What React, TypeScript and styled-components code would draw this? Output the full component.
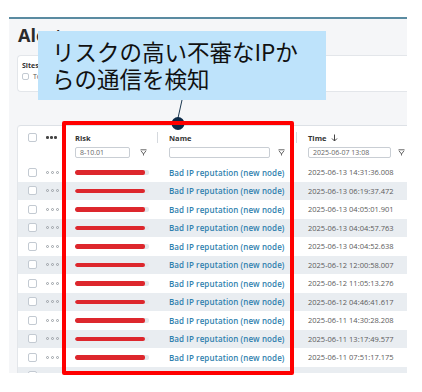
import React from 'react';
import styled, { createGlobalStyle } from 'styled-components';

const GlobalStyle = createGlobalStyle`
  html, body {
    margin: 0;
    padding: 0;
    background: #ffffff;
  }
  body {
    font-family: 'Open Sans', 'Liberation Sans', sans-serif;
  }
`;

const Page = styled.div`
  position: relative;
  width: 422px;
  height: 392px;
  overflow: hidden;
  padding: 17px 0 0 9px;
  box-sizing: border-box;
`;

const Shot = styled.div`
  width: 398px;
  height: 356px;
  border-top: 2px solid #5a8ba1;
  background: #f5f6f8;
  overflow: hidden;
  display: flex;
  flex-direction: column;
  padding-left: 8px;
  box-sizing: border-box;
`;

const Heading = styled.div`
  height: 36px;
  flex-shrink: 0;
  padding: 4px 0 0 1px;
  box-sizing: border-box;
  font-size: 18px;
  line-height: 24px;
  font-weight: 700;
  color: #2b2b2b;
`;

const FilterCard = styled.div`
  height: 37px;
  flex-shrink: 0;
  background: #ffffff;
  border: 1px solid #e3e6ea;
  border-right: none;
  border-radius: 4px 0 0 4px;
  padding: 5px 0 0 4px;
  box-sizing: border-box;
  display: flex;
  flex-direction: column;
  gap: 2px;
`;

const SmallTitle = styled.div`
  font-size: 7px;
  line-height: 9px;
  font-weight: 700;
  color: #333;
`;

const CheckLine = styled.div`
  display: flex;
  align-items: center;
  gap: 4px;
  font-size: 7px;
  line-height: 9px;
  color: #555;
`;

const Spacer = styled.div`
  height: 33px;
  flex-shrink: 0;
`;

const TableCard = styled.div`
  flex: 1;
  background: #ffffff;
  border-top: 1px solid #dde1e6;
  border-left: 1px solid #e3e6ea;
  border-radius: 4px 0 0 0;
  display: flex;
  flex-direction: column;
`;

const HeaderRow = styled.div`
  height: 37px;
  flex-shrink: 0;
  display: flex;
  padding-top: 6px;
  box-sizing: border-box;
`;

const Row = styled.div<{ $striped: boolean }>`
  height: 18.5px;
  flex-shrink: 0;
  display: flex;
  align-items: center;
  background: ${({ $striped }) => ($striped ? '#e9edf1' : '#ffffff')};
`;

const Cell = styled.div<{ $w?: number; $pl?: number }>`
  ${({ $w }) => ($w ? `width: ${$w}px; flex-shrink: 0;` : 'flex: 1;')}
  padding-left: ${({ $pl }) => $pl ?? 0}px;
  box-sizing: border-box;
  display: flex;
  flex-direction: column;
  white-space: nowrap;
`;

const Label = styled.div<{ $divider?: boolean }>`
  position: relative;
  height: 11px;
  display: flex;
  align-items: center;
  gap: 5px;
  font-size: 7.5px;
  font-weight: 700;
  color: #333;
  &::before {
    content: '';
    display: ${({ $divider }) => ($divider ? 'block' : 'none')};
    position: absolute;
    left: -12px;
    top: 0;
    width: 1px;
    height: 11px;
    background: #d5d9de;
  }
`;

const FilterLine = styled.div<{ $w: number }>`
  width: ${({ $w }) => $w}px;
  margin-top: 4px;
  display: flex;
  align-items: center;
  justify-content: space-between;
`;

const Input = styled.div<{ $w: number }>`
  width: ${({ $w }) => $w}px;
  height: 11px;
  border: 1px solid #c9ced4;
  border-radius: 2px;
  box-sizing: border-box;
  padding-left: 4px;
  font-size: 7px;
  line-height: 9px;
  color: #666;
`;

const Box = styled.div<{ $size?: number }>`
  width: ${({ $size }) => $size ?? 9}px;
  height: ${({ $size }) => $size ?? 9}px;
  border: 1px solid #c3cad2;
  border-radius: 2px;
  background: #fff;
  box-sizing: border-box;
`;

const Dots = styled.div`
  display: flex;
  gap: 1.5px;
`;

const Dot = styled.span<{ $hollow?: boolean }>`
  width: ${({ $hollow }) => ($hollow ? 3.4 : 2.6)}px;
  height: ${({ $hollow }) => ($hollow ? 3.4 : 2.6)}px;
  border-radius: 50%;
  box-sizing: border-box;
  ${({ $hollow }) =>
    $hollow ? 'border: 0.8px solid #9aa0a6;' : 'background: #444;'}
`;

const Track = styled.div`
  width: 74px;
  height: 4.5px;
  border-radius: 2px;
  background: #e3e7eb;
  overflow: hidden;
`;

const Fill = styled.div`
  height: 100%;
  border-radius: 2px;
  background: #dd272d;
`;

const LinkText = styled.span`
  font-size: 8px;
  letter-spacing: 0.1px;
  font-weight: 600;
  color: #2f7fae;
`;

const TimeText = styled.span`
  font-size: 7.5px;
  color: #5b5b5b;
`;

const Callout = styled.div`
  position: absolute;
  left: 38px;
  top: 31px;
  width: 288px;
  height: 69px;
  background: #bee3fb;
  padding: 7px 0 0 14px;
  box-sizing: border-box;
  font-family: 'Noto Sans CJK JP', sans-serif;
  font-size: 22.5px;
  line-height: 27px;
  color: #111;
`;

const Pin = styled.svg`
  position: absolute;
  left: 168px;
  top: 100px;
`;

const Highlight = styled.div`
  position: absolute;
  left: 62px;
  top: 121px;
  width: 232px;
  height: 254px;
  border: 4.5px solid #ff0000;
  border-radius: 2px;
  box-sizing: border-box;
`;

const FunnelIcon = () => (
  <svg width="7" height="7" viewBox="0 0 7 7">
    <path d="M0.5 0.8 H6.5 M1 1.8 L3.5 5 L6 1.8 M3.5 5 V6.5" stroke="#555" strokeWidth="0.9" fill="none" />
  </svg>
);

const ArrowDown = () => (
  <svg width="7" height="8" viewBox="0 0 7 8">
    <path d="M3.5 0.5 V7 M1 4.5 L3.5 7 L6 4.5" stroke="#444" strokeWidth="1" fill="none" />
  </svg>
);

const times = [
  '2025-06-13 14:31:36.008',
  '2025-06-13 06:19:37.472',
  '2025-06-13 04:05:01.901',
  '2025-06-13 04:04:57.763',
  '2025-06-13 04:04:52.638',
  '2025-06-12 12:00:58.007',
  '2025-06-12 11:05:13.276',
  '2025-06-12 04:46:41.617',
  '2025-06-11 14:30:28.208',
  '2025-06-11 13:17:49.577',
  '2025-06-11 07:51:17.175',
];

const W = { check: 28, dots: 29, risk: 82, name: 139 };

export default function App() {
  return (
    <Page>
      <GlobalStyle />
      <Shot>
        <Heading>Alerts</Heading>
        <FilterCard>
          <SmallTitle>Sites</SmallTitle>
          <CheckLine>
            <Box $size={7} />
            Tokyo HQ
          </CheckLine>
        </FilterCard>
        <Spacer />
        <TableCard>
          <HeaderRow>
            <Cell $w={W.check} $pl={10}>
              <Label>
                <Box />
              </Label>
            </Cell>
            <Cell $w={W.dots}>
              <Label>
                <Dots>
                  <Dot />
                  <Dot />
                  <Dot />
                </Dots>
              </Label>
            </Cell>
            <Cell $w={W.risk}>
              <Label>Risk</Label>
              <FilterLine $w={72}>
                <Input $w={55}>8-10.01</Input>
                <FunnelIcon />
              </FilterLine>
            </Cell>
            <Cell $w={W.name} $pl={12}>
              <Label $divider>Name</Label>
              <FilterLine $w={116}>
                <Input $w={101} />
                <FunnelIcon />
              </FilterLine>
            </Cell>
            <Cell $pl={12}>
              <Label $divider>
                Time
                <ArrowDown />
              </Label>
              <FilterLine $w={97}>
                <Input $w={83}>2025-06-07 13:08</Input>
                <FunnelIcon />
              </FilterLine>
            </Cell>
          </HeaderRow>
          {times.map((t, i) => (
            <Row key={t} $striped={i % 2 === 1}>
              <Cell $w={W.check} $pl={10}>
                <Box />
              </Cell>
              <Cell $w={W.dots}>
                <Dots>
                  <Dot $hollow />
                  <Dot $hollow />
                  <Dot $hollow />
                </Dots>
              </Cell>
              <Cell $w={W.risk}>
                <Track>
                  <Fill style={{ width: `${(70 / 74) * 100}%` }} />
                </Track>
              </Cell>
              <Cell $w={W.name} $pl={12}>
                <LinkText>Bad IP reputation (new node)</LinkText>
              </Cell>
              <Cell $pl={12}>
                <TimeText>{t}</TimeText>
              </Cell>
            </Row>
          ))}
          <Row $striped>
            <Cell $w={W.check} $pl={10}>
              <Box />
            </Cell>
          </Row>
        </TableCard>
      </Shot>
      <Callout>
        リスクの高い不審なIPか
        <br />
        らの通信を検知
      </Callout>
      <Pin width="20" height="31" viewBox="0 0 20 31">
        <line x1="14" y1="0" x2="10" y2="18" stroke="#1b3650" strokeWidth="1" />
        <circle cx="10" cy="23.5" r="6.5" fill="#0c2a48" />
      </Pin>
      <Highlight />
    </Page>
  );
}
